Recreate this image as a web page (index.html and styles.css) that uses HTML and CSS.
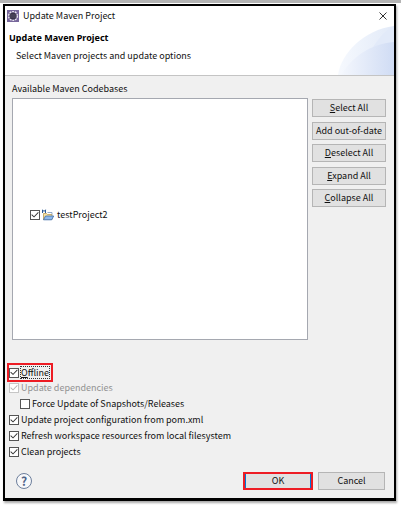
FILE: index.html
```html
<!DOCTYPE html>
<html lang="en">
    <head>
        <meta charset="utf-8">
        <title>Update Maven Project</title>
        <link rel="stylesheet" href="styles.css">
    </head>
    <body>
        <form class="dialog">
            <div class="titlebar">
                <svg class="app-icon" viewBox="0 0 12 12">
                    <rect width="12" height="12" fill="#77679b"/>
                    <circle cx="6" cy="6" r="4.3" fill="none" stroke="#e9e5ee" stroke-width="1.6" stroke-dasharray="1.8 .9"/>
                    <circle cx="6" cy="6" r="3.5" fill="#393548"/>
                    <path d="M3 5h6M3 7h6" stroke="#69627a" stroke-width=".6"/>
                </svg>
                <span class="title">Update Maven Project</span>
                <button class="close" type="button" aria-label="Close">
                    <svg viewBox="0 0 8 8"><path d="M.5.5l7 7M7.5.5l-7 7" stroke="#333" fill="none"/></svg>
                </button>
            </div>

            <div class="header">
                <div class="header-text">
                    <h1>Update Maven Project</h1>
                    <p>Select Maven projects and update options</p>
                </div>
                <svg class="swoosh" viewBox="0 0 56 50">
                    <defs>
                        <linearGradient id="fade">
                            <stop offset="0" stop-color="#f6f9fe"/>
                            <stop offset="1" stop-color="#e2eaf8"/>
                        </linearGradient>
                        <linearGradient id="deep">
                            <stop offset="0" stop-color="#f4f7fd"/>
                            <stop offset="1" stop-color="#d0dcf4"/>
                        </linearGradient>
                    </defs>
                    <path d="M0 50C3 28 26 5 56 1V50z" fill="url(#fade)"/>
                    <path d="M34 24C40 14 47 5 56 1V17C48 18 41 21 34 24z" fill="#e2eaf9"/>
                    <path d="M3 50C14 32 32 19 56 17V50z" fill="url(#deep)"/>
                </svg>
            </div>

            <div class="content">
                <div class="caption">Available Maven Codebases</div>
                <div class="codebases">
                    <div class="tree">
                        <label class="check">
                            <input type="checkbox" checked>
                            <svg class="folder" viewBox="0 0 12 12">
                                <path d="M1.5 10.5V4.5h3l1 1h4.5v5z" fill="#f6e2a2" stroke="#b99a55" stroke-width=".8"/>
                                <path d="M1.5 10.8L3.5 7h8.2l-2 3.8z" fill="#8fb9ec" stroke="#3e6ca9" stroke-width=".8"/>
                                <path d="M.5 4V.8L2 2.5 3.5.8V4" fill="none" stroke="#2b5a94"/>
                                <path d="M5.5 3.5h4.5v2" fill="none" stroke="#7796bc" stroke-width=".8"/>
                            </svg>
                            <span>testProject2</span>
                        </label>
                    </div>
                    <div class="actions">
                        <button type="button"><u>S</u>elect All</button>
                        <button type="button">Add out-of-date</button>
                        <button type="button"><u>D</u>eselect All</button>
                        <button type="button"><u>E</u>xpand All</button>
                        <button type="button"><u>C</u>ollapse All</button>
                    </div>
                </div>
            </div>

            <div class="options">
                <label class="check marked"><input type="checkbox" checked><span class="focused"><u>O</u>ffline</span></label>
                <label class="check"><input type="checkbox" checked disabled><span>Update dependencies</span></label>
                <label class="check nested"><input type="checkbox"><span>Force Update of Snapshots/Releases</span></label>
                <label class="check"><input type="checkbox" checked><span>Update project configuration from pom.xml</span></label>
                <label class="check"><input type="checkbox" checked><span>Refresh workspace resources from local filesystem</span></label>
                <label class="check"><input type="checkbox" checked><span>Clean projects</span></label>
            </div>

            <div class="footer">
                <button class="help" type="button" aria-label="Help">?</button>
                <button class="ok" type="submit">OK</button>
                <button class="cancel" type="button">Cancel</button>
            </div>
        </form>
    </body>
</html>
```

FILE: styles.css
```css
* {
    box-sizing: border-box;
}
body {
    margin: 0;
    padding: 1px 5px 4px 3px;
    border-top: 3px solid #b4b4b4;
    background-color: white;
    color: #111;
    font-family: "Noto Sans CJK KR", sans-serif;
    font-size: 9px;
    line-height: 16px;
}
button {
    height: 18px;
    padding: 0;
    border: 1px solid #b5b5b5;
    background-color: #e1e1e1;
    color: inherit;
    font: inherit;
    line-height: 14px;
    white-space: nowrap;
}
u {
    text-underline-offset: 1px;
}

.dialog {
    border: 2px solid black;
    border-bottom-width: 3px;
    background-color: #f0f0f0;
    box-shadow: 1px 2px 2px #aaa;
}
.titlebar {
    display: flex;
    align-items: center;
    height: 19px;
    padding: 0 7px 0 2px;
    background-color: white;
}
.app-icon {
    width: 12px;
    height: 12px;
    margin-right: 4px;
}
.title {
    flex: 1;
}
.close {
    display: flex;
    align-items: center;
    border: 0;
    background: none;
}
.close svg {
    width: 8px;
    height: 8px;
}

.header {
    display: flex;
    justify-content: space-between;
    height: 51px;
    border-bottom: 1px solid #c4c4c4;
    background-color: white;
}
.header-text {
    padding: 5px 0 0 4px;
}
h1 {
    margin: 0;
    color: black;
    font-family: "Noto Sans", sans-serif;
    font-size: 9px;
    line-height: 16px;
}
p {
    margin: 2px 0 0 7px;
}
.swoosh {
    width: 56px;
    height: 50px;
}

.content {
    padding: 5px 8px 0 7px;
}
.caption {
    margin-bottom: 1px;
}
.codebases {
    display: flex;
    gap: 4px;
}
.tree {
    flex: 1;
    height: 242px;
    padding: 108px 0 0 17px;
    border: 1px solid #a5a8b0;
    background-color: white;
}
.actions {
    display: flex;
    flex-direction: column;
    justify-content: space-between;
    width: 74px;
    height: 109px;
    padding-top: 1px;
}

.check {
    display: flex;
    align-items: center;
    gap: 2px;
    height: 16px;
    white-space: nowrap;
}
.check input {
    flex: none;
    appearance: none;
    width: 10px;
    height: 10px;
    margin: 0;
    border: 1px solid #555;
    background-color: white;
}
.check input:checked::before {
    content: "";
    display: block;
    height: 8px;
    background-color: #333;
    clip-path: polygon(4% 50%, 12% 42%, 38% 67%, 88% 14%, 96% 22%, 38% 82%);
}
.check input:disabled {
    border-color: #c6c6c6;
}
.check input:disabled::before {
    background-color: #b5b5b5;
}
.check input:disabled + span {
    color: #929292;
}
.folder {
    width: 12px;
    height: 12px;
    margin-right: 1px;
}
.options {
    display: flex;
    flex-direction: column;
    align-items: flex-start;
    padding: 25px 4px 0;
}
.marked {
    height: 15px;
    padding-right: 2px;
    outline: 2px solid #ed1c24;
}
.marked .focused {
    outline: 1px dotted #333;
    line-height: 11px;
}
.nested {
    margin-left: 11px;
}

.footer {
    display: flex;
    align-items: center;
    padding: 12px 9px 8px 11px;
}
.help {
    width: 16px;
    height: 16px;
    margin-right: auto;
    border-color: #6d7f9c;
    border-radius: 50%;
    background-color: #f7f8fa;
    color: #4f6488;
    font-size: 12px;
    font-weight: bold;
}
.ok {
    width: 70px;
    margin-right: 5px;
    border: 2px solid #ed1c24;
    box-shadow: inset -1px 0 #0078d7, inset 1px 0 #0078d7;
}
.cancel {
    width: 67px;
}
```
